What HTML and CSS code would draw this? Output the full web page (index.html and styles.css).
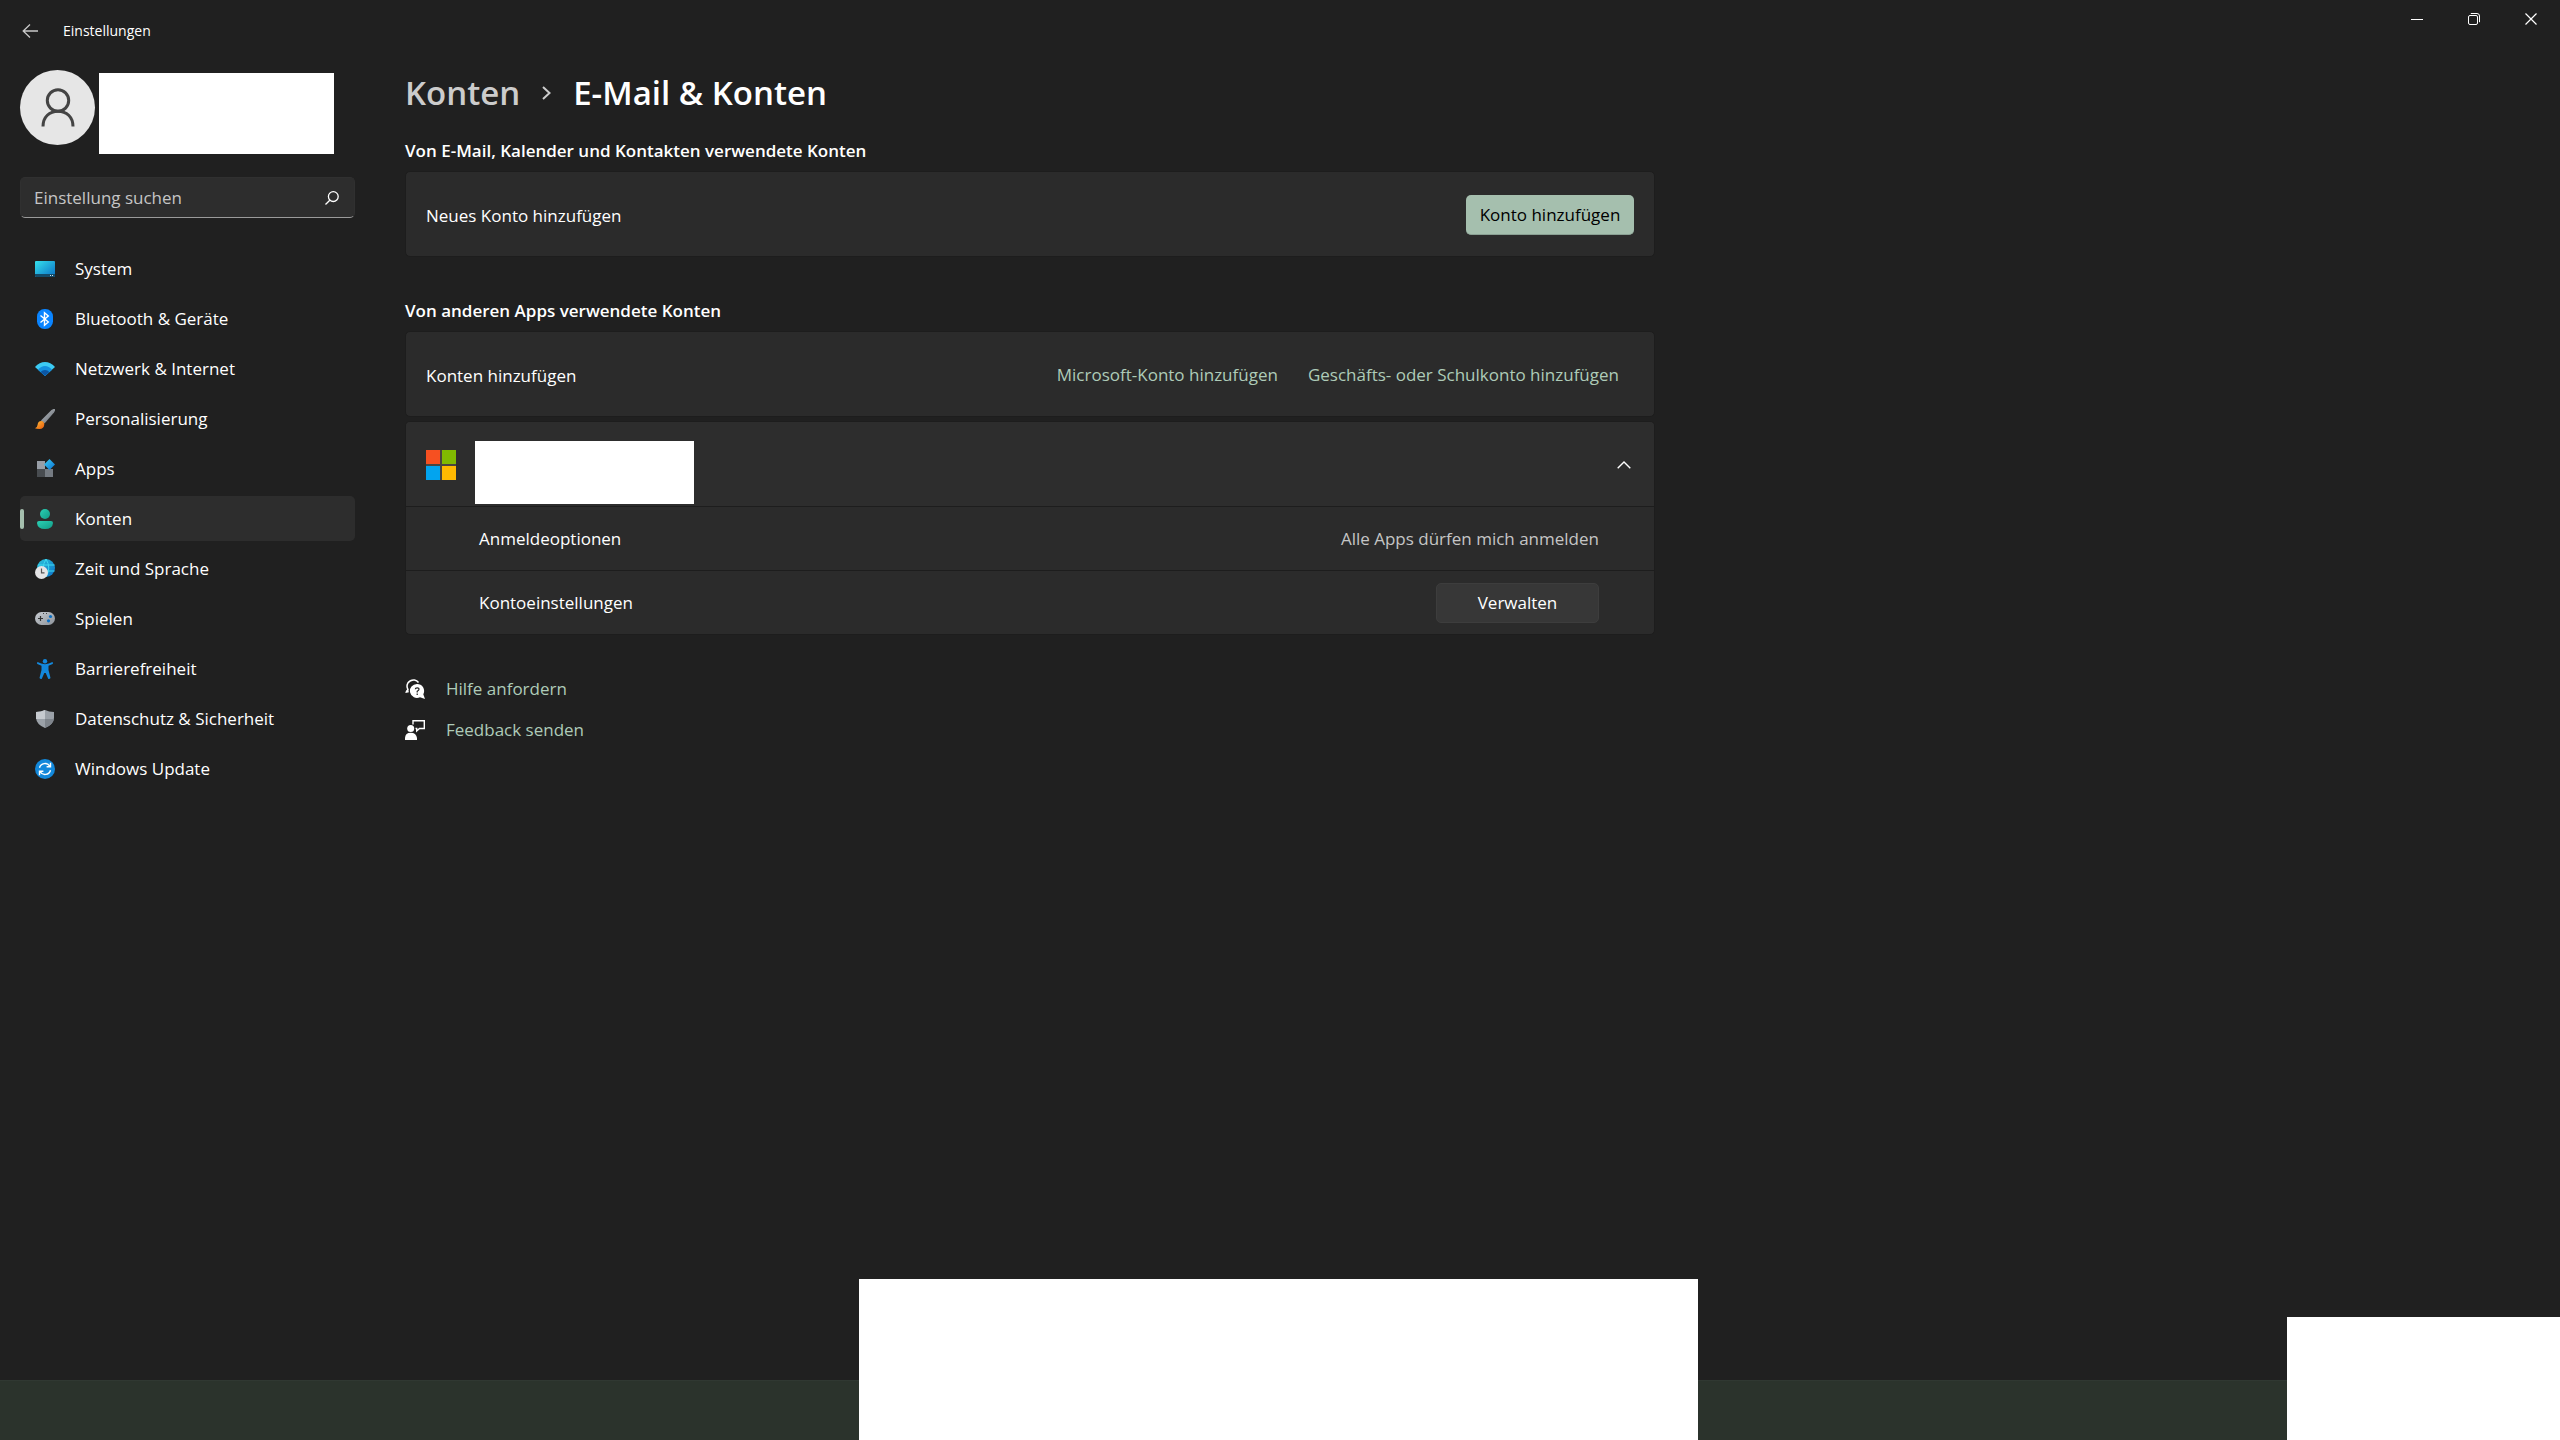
FILE: index.html
```html
<!DOCTYPE html>
<html lang="de">
<head>
    <meta charset="UTF-8">
    <title>Einstellungen</title>
    <link rel="stylesheet" href="styles.css">
</head>
<body>
    <header class="titlebar">
        <button class="back" aria-label="Zurück">
            <svg width="16" height="14" viewBox="0 0 16 14"><path d="M8 0.5L1.2 7L8 13.5M1.2 7H16" fill="none" stroke="#c8c8c8" stroke-width="1.3"/></svg>
        </button>
        <span class="title">Einstellungen</span>
        <div class="controls">
            <button aria-label="Minimieren">
                <svg width="12" height="12" viewBox="0 0 12 12"><path d="M0 6.5H12" stroke="#fff"/></svg>
            </button>
            <button aria-label="Wiederherstellen">
                <svg width="12" height="12" viewBox="0 0 12 12" fill="none" stroke="#fff"><rect x="0.5" y="2.5" width="9" height="9" rx="1.5"/><path d="M2.8 0.5H9Q11.5 0.5 11.5 3V9.2"/></svg>
            </button>
            <button aria-label="Schließen">
                <svg width="12" height="12" viewBox="0 0 12 12"><path d="M0.5 0.5L11.5 11.5M11.5 0.5L0.5 11.5" stroke="#fff" stroke-width="1.2"/></svg>
            </button>
        </div>
    </header>

    <div class="window">
        <aside class="sidebar">
            <div class="profile">
                <div class="avatar">
                    <svg width="34" height="39" viewBox="0 0 34 39" fill="none" stroke="#444" stroke-width="3"><circle cx="17" cy="12.5" r="10.7"/><path d="M2 38.5C2 29 8.5 23.2 17 23.2S32 29 32 38.5"/></svg>
                </div>
                <div class="profileName"></div>
            </div>
            <form class="search">
                <input type="search" placeholder="Einstellung suchen" aria-label="Einstellung suchen">
                <button type="button" aria-label="Suchen">
                    <svg width="14" height="14" viewBox="0 0 14 14" fill="none" stroke="#fff" stroke-width="1.3"><circle cx="8.3" cy="5.6" r="4.9"/><path d="M4.8 9.2L0.5 13.5"/></svg>
                </button>
            </form>
            <nav>
                <a href="#">
                    <svg width="20" height="20" viewBox="0 0 20 20">
                        <defs><linearGradient id="gSystem" x1="0" y1="0" x2="1" y2="1"><stop offset="0" stop-color="#35e0ec"/><stop offset="1" stop-color="#0a6fc4"/></linearGradient></defs>
                        <rect y="2" width="20" height="16" rx="1" fill="url(#gSystem)"/>
                        <path d="M0 15H20V17Q20 18 19 18H1Q0 18 0 17Z" fill="#134a68"/>
                        <path d="M15 16.5H16M17 16.5H18" stroke="#cfe6f0"/>
                    </svg>
                    System
                </a>
                <a href="#">
                    <svg width="20" height="20" viewBox="0 0 20 20">
                        <rect x="2" width="16" height="20" rx="7.5" fill="#0a84ff"/>
                        <path d="M5.5 6.5L13.3 13L9.5 16.2V3.8L13.3 7L5.5 13.5" fill="none" stroke="#fff" stroke-width="1.4"/>
                    </svg>
                    Bluetooth &amp; Geräte
                </a>
                <a href="#">
                    <svg width="20" height="20" viewBox="0 0 20 20">
                        <path d="M0 8Q4.5 3 10 3T20 8L10 17Z" fill="#3ccbf4"/>
                        <path d="M3 10.7Q6.2 7 10 7T17 10.7L10 17Z" fill="#1490df"/>
                        <path d="M5.6 13Q7.5 11 10 11T14.4 13L10 17Z" fill="#0b56a4"/>
                    </svg>
                    Netzwerk &amp; Internet
                </a>
                <a href="#">
                    <svg width="20" height="20" viewBox="0 0 20 20">
                        <defs>
                            <linearGradient id="gHandle" x1="0" y1="0" x2="1" y2="1"><stop offset="0" stop-color="#b9bec4"/><stop offset="1" stop-color="#646a70"/></linearGradient>
                            <linearGradient id="gTip" x1="0" y1="0" x2="1" y2="1"><stop offset="0" stop-color="#ffc13b"/><stop offset="1" stop-color="#e8590c"/></linearGradient>
                        </defs>
                        <path d="M6 11.5L16.5 1Q18.5 -0.5 20 0Q20.3 1.5 19 3.5L9.5 14.5Z" fill="url(#gHandle)"/>
                        <path d="M0 19.2Q2.5 18.5 2.6 15.8Q2.9 12 6.2 12Q9.3 12.4 9.3 15.6Q9 20 4.5 20Q1.5 20 0 19.2Z" fill="url(#gTip)"/>
                    </svg>
                    Personalisierung
                </a>
                <a href="#">
                    <svg width="20" height="20" viewBox="0 0 20 20">
                        <defs><linearGradient id="gApp" x1="0" y1="0" x2="1" y2="1"><stop offset="0" stop-color="#3cd0f5"/><stop offset="1" stop-color="#0a6fd0"/></linearGradient></defs>
                        <rect x="2" y="2" width="8" height="8" fill="#989ea6"/>
                        <rect x="2" y="10" width="8" height="8" fill="#484c50"/>
                        <rect x="10" y="10" width="8" height="8" fill="#757b82"/>
                        <path d="M14.5 0L20 5.5L14.5 11L9 5.5Z" fill="url(#gApp)"/>
                    </svg>
                    Apps
                </a>
                <a href="#" class="active" aria-current="page">
                    <svg width="20" height="20" viewBox="0 0 20 20">
                        <defs><linearGradient id="gUser" x1="0" y1="0" x2="1" y2="1"><stop offset="0" stop-color="#2bd0b4"/><stop offset="1" stop-color="#119b86"/></linearGradient></defs>
                        <circle cx="10" cy="5" r="5" fill="url(#gUser)"/>
                        <path d="M4 12H16Q18 12 18 14Q17.5 20 10 20T2 14Q2 12 4 12Z" fill="url(#gUser)"/>
                    </svg>
                    Konten
                </a>
                <a href="#">
                    <svg width="20" height="20" viewBox="0 0 20 20">
                        <defs><linearGradient id="gGlobe" x1="0" y1="0" x2="1" y2="1"><stop offset="0" stop-color="#2dc5dc"/><stop offset="1" stop-color="#0c70c8"/></linearGradient></defs>
                        <circle cx="11" cy="9" r="9" fill="url(#gGlobe)"/>
                        <path d="M3 6H19.5M3 12H19.5M11 0Q5.5 9 11 18Q16.5 9 11 0" fill="none" stroke="#3fd9ee"/>
                        <circle cx="6.5" cy="13.5" r="6.5" fill="#e4e4e6"/>
                        <path d="M6.5 9.5V13.8H9.5" fill="none" stroke="#555" stroke-width="1.2"/>
                    </svg>
                    Zeit und Sprache
                </a>
                <a href="#">
                    <svg width="20" height="20" viewBox="0 0 20 20">
                        <defs><linearGradient id="gPad" x1="0" y1="0" x2="1" y2="1"><stop offset="0" stop-color="#c9cdd2"/><stop offset="1" stop-color="#8c9299"/></linearGradient></defs>
                        <rect y="3" width="20" height="13" rx="6.5" fill="url(#gPad)"/>
                        <path d="M3 9.5H8M5.5 7V12" stroke="#333" stroke-width="1.2"/>
                        <path d="M8 4.5H9M11 4.5H12" stroke="#444"/>
                        <circle cx="15.5" cy="7.5" r="1.6" fill="#0a6fc4"/>
                        <circle cx="13.5" cy="11.8" r="1.6" fill="#0a6fc4"/>
                    </svg>
                    Spielen
                </a>
                <a href="#">
                    <svg width="20" height="20" viewBox="0 0 20 20" fill="#1388dc">
                        <circle cx="10" cy="2.2" r="2.2"/>
                        <path d="M2.6 3.1Q6 5.2 10 5.2T17.4 3.1Q18.4 4.2 17.6 5L13.5 6.8V11L15.5 19Q14.5 20.4 13.2 19.8L10.7 14H9.3L6.8 19.8Q5.5 20.4 4.5 19L6.5 11V6.8L2.4 5Q1.6 4.2 2.6 3.1Z"/>
                    </svg>
                    Barrierefreiheit
                </a>
                <a href="#">
                    <svg width="20" height="20" viewBox="0 0 20 20">
                        <path d="M10 1Q14 3 19 3V9Q18.5 15.5 10 19Q1.5 15.5 1 9V3Q6 3 10 1Z" fill="#9ba1a8"/>
                        <path d="M10 1Q6 3 1 3V10H10Z" fill="#c6cacf"/>
                        <path d="M10 10H19Q18 15.7 10 19Z" fill="#7f858c"/>
                    </svg>
                    Datenschutz &amp; Sicherheit
                </a>
                <a href="#">
                    <svg width="20" height="20" viewBox="0 0 20 20">
                        <circle cx="10" cy="10" r="10" fill="#1288db"/>
                        <path d="M4.5 8.8A5.7 5.7 0 0 1 14.8 7.2M15.5 3.8V7.7H11.6M15.5 11.2A5.7 5.7 0 0 1 5.2 12.8M4.5 16.2V12.3H8.4" fill="none" stroke="#fff" stroke-width="1.4"/>
                    </svg>
                    Windows Update
                </a>
            </nav>
        </aside>

        <main>
            <h1>
                <a href="#">Konten</a>
                <svg width="9" height="14" viewBox="0 0 9 14"><path d="M1 1L7.5 7L1 13" fill="none" stroke="#ccc" stroke-width="2"/></svg>
                <span>E-Mail &amp; Konten</span>
            </h1>

            <section>
                <h2>Von E-Mail, Kalender und Kontakten verwendete Konten</h2>
                <div class="card">
                    <div class="row">
                        <span>Neues Konto hinzufügen</span>
                        <button class="button accent">Konto hinzufügen</button>
                    </div>
                </div>
            </section>

            <section>
                <h2>Von anderen Apps verwendete Konten</h2>
                <div class="card">
                    <div class="row">
                        <span>Konten hinzufügen</span>
                        <div class="links">
                            <a href="#">Microsoft-Konto hinzufügen</a>
                            <a href="#">Geschäfts- oder Schulkonto hinzufügen</a>
                        </div>
                    </div>
                </div>
                <div class="card account">
                    <div class="row">
                        <svg width="30" height="30" viewBox="0 0 30 30">
                            <rect width="30" height="30" fill="#4a4540"/>
                            <rect width="14" height="14" fill="#f65021"/>
                            <rect x="16" width="14" height="14" fill="#80ba01"/>
                            <rect y="16" width="14" height="14" fill="#02a4ef"/>
                            <rect x="16" y="16" width="14" height="14" fill="#ffb901"/>
                        </svg>
                        <div class="accountName"></div>
                        <button class="expander" aria-label="Reduzieren" aria-expanded="true">
                            <svg width="14" height="8" viewBox="0 0 14 8"><path d="M0.7 7.3L7 1L13.3 7.3" fill="none" stroke="#fff" stroke-width="1.4"/></svg>
                        </button>
                    </div>
                    <div class="subrow">
                        <span>Anmeldeoptionen</span>
                        <span class="hint">Alle Apps dürfen mich anmelden</span>
                    </div>
                    <div class="subrow">
                        <span>Kontoeinstellungen</span>
                        <button class="button manage">Verwalten</button>
                    </div>
                </div>
            </section>

            <div class="help">
                <a href="#">
                    <svg width="20" height="20" viewBox="0 0 20 20">
                        <path d="M1.5 13.5L3 10.5Q1 7 3 3.8Q5.5 0.5 9.5 1Q12 1.5 13.5 3.5" fill="none" stroke="#fff" stroke-width="1.5"/>
                        <path d="M0 13.8L2.5 9.5L4 13.3Z" fill="#fff"/>
                        <path d="M12 5A7 7 0 1 0 15 18.3L20 20L18.3 15.3A7 7 0 0 0 12 5Z" fill="#fff"/>
                        <path d="M10.3 10.3Q10.3 8.8 12.2 8.8T14 10.3Q14 11.2 12.2 12.3V13.5M12.2 14.5V16" fill="none" stroke="#202020" stroke-width="1.2"/>
                    </svg>
                    Hilfe anfordern
                </a>
                <a href="#">
                    <svg width="20" height="20" viewBox="0 0 20 20">
                        <circle cx="5.7" cy="8.5" r="3.5" fill="#fff"/>
                        <path d="M0 20V18Q0.3 12.8 5.7 12.8T12 18V20Z" fill="#fff"/>
                        <path d="M8 4.5V0.7H19.3V8.5H14.5L11.7 11V8.5H10.5" fill="none" stroke="#fff" stroke-width="1.4"/>
                    </svg>
                    Feedback senden
                </a>
            </div>
        </main>
    </div>

    <footer class="taskbar">
        <div class="cover apps"></div>
        <div class="cover tray"></div>
    </footer>
</body>
</html>
```
FILE: styles.css
```css
* {
    box-sizing: border-box;
}
body {
    display: flex;
    flex-direction: column;
    min-height: 100vh;
    margin: 0;
    background-color: #202020;
    color: white;
    font-family: "Segoe UI", "Open Sans", sans-serif;
    font-size: 17px;
    line-height: 24px;
}
button {
    border: none;
    padding: 0;
    background: none;
    color: inherit;
    font: inherit;
}
a {
    color: #aecbb8;
    text-decoration: none;
}
svg {
    display: block;
    flex-shrink: 0;
}

/* title bar */
.titlebar {
    display: flex;
    align-items: center;
    height: 62px;
    padding: 0 1px 0 22px;
}
.title {
    margin-left: 25px;
    font-size: 14px;
}
.controls {
    display: flex;
    align-self: flex-start;
    margin-left: auto;
}
.controls button {
    display: flex;
    justify-content: center;
    align-items: center;
    width: 57px;
    height: 38px;
}

.window {
    display: flex;
    flex: 1;
    gap: 50px;
    padding: 0 20px;
}

/* sidebar */
.sidebar {
    width: 335px;
    padding-top: 8px;
}
.profile {
    display: flex;
    gap: 4px;
    height: 107px;
}
.avatar {
    display: flex;
    justify-content: center;
    align-items: center;
    width: 75px;
    height: 75px;
    border-radius: 50%;
    background-color: #e6e6e6;
}
.profileName {
    width: 235px;
    height: 81px;
    margin-top: 3px;
    background-color: white;
}
.search {
    display: flex;
    align-items: center;
    height: 41px;
    padding: 0 15px 0 13px;
    border: 1px solid #303030;
    border-bottom-color: #9a9a9a;
    border-radius: 5px;
    background-color: #2d2d2d;
}
.search input {
    flex: 1;
    min-width: 0;
    padding: 0;
    border: none;
    outline: none;
    background: none;
    color: white;
    font: inherit;
}
.search input::placeholder {
    color: #c5c5c5;
}
nav {
    display: flex;
    flex-direction: column;
    gap: 5px;
    margin-top: 28px;
}
nav a {
    display: flex;
    align-items: center;
    gap: 20px;
    height: 45px;
    padding: 0 15px;
    border-radius: 5px;
    color: white;
}
nav a.active {
    position: relative;
    background-color: #2d2d2d;
}
nav a.active::before {
    content: "";
    position: absolute;
    left: 0;
    width: 4px;
    height: 20px;
    border-radius: 2px;
    background-color: #a5bfae;
}

/* content */
main {
    flex: 1;
    max-width: 1250px;
}
h1 {
    display: flex;
    align-items: center;
    gap: 22px;
    margin: 7px 0 0;
    font-size: 33px;
    font-weight: 600;
    line-height: 48px;
}
h1 a {
    color: #cccccc;
}
h2 {
    margin: 0 0 8px;
    font-size: 17px;
    font-weight: 600;
    line-height: 24px;
}
section {
    margin-top: 22px;
}
section + section {
    margin-top: 42px;
}
.card {
    border: 1px solid #1d1d1d;
    border-radius: 5px;
    background-color: #2b2b2b;
}
.card + .card {
    margin-top: 4px;
}
.row {
    display: flex;
    justify-content: space-between;
    align-items: center;
    height: 84px;
    padding: 2px 20px 0;
}
.row > span {
    padding-top: 2px;
}
.button {
    height: 40px;
    border-radius: 5px;
}
.accent {
    width: 168px;
    border-bottom: 1px solid #8aa093;
    background-color: #a5bfae;
    color: black;
}
.links {
    display: flex;
    gap: 30px;
    padding-right: 15px;
}
.account .row {
    justify-content: flex-start;
    background-color: #2d2d2d;
    border-radius: 4px 4px 0 0;
}
.accountName {
    align-self: flex-end;
    width: 219px;
    height: 63px;
    margin: 0 0 2px 19px;
    background-color: white;
}
.expander {
    margin-left: auto;
    padding: 10px 3px;
}
.subrow {
    display: flex;
    justify-content: space-between;
    align-items: center;
    height: 64px;
    padding: 0 55px 0 73px;
    border-top: 1px solid #1d1d1d;
}
.hint {
    color: #c5c5c5;
}
.manage {
    width: 163px;
    border: 1px solid #3d3d3d;
    background-color: #373737;
}
.help {
    display: flex;
    flex-direction: column;
    align-items: flex-start;
    gap: 17px;
    margin-top: 42px;
}
.help a {
    display: flex;
    align-items: center;
    gap: 21px;
}

/* taskbar */
.taskbar {
    position: relative;
    height: 60px;
    border-top: 1px solid #303832;
    background-color: #2b332c;
}
.cover {
    position: absolute;
    bottom: 0;
    background-color: white;
}
.apps {
    left: 859px;
    width: 839px;
    height: 161px;
}
.tray {
    right: 0;
    width: 273px;
    height: 123px;
}
```
